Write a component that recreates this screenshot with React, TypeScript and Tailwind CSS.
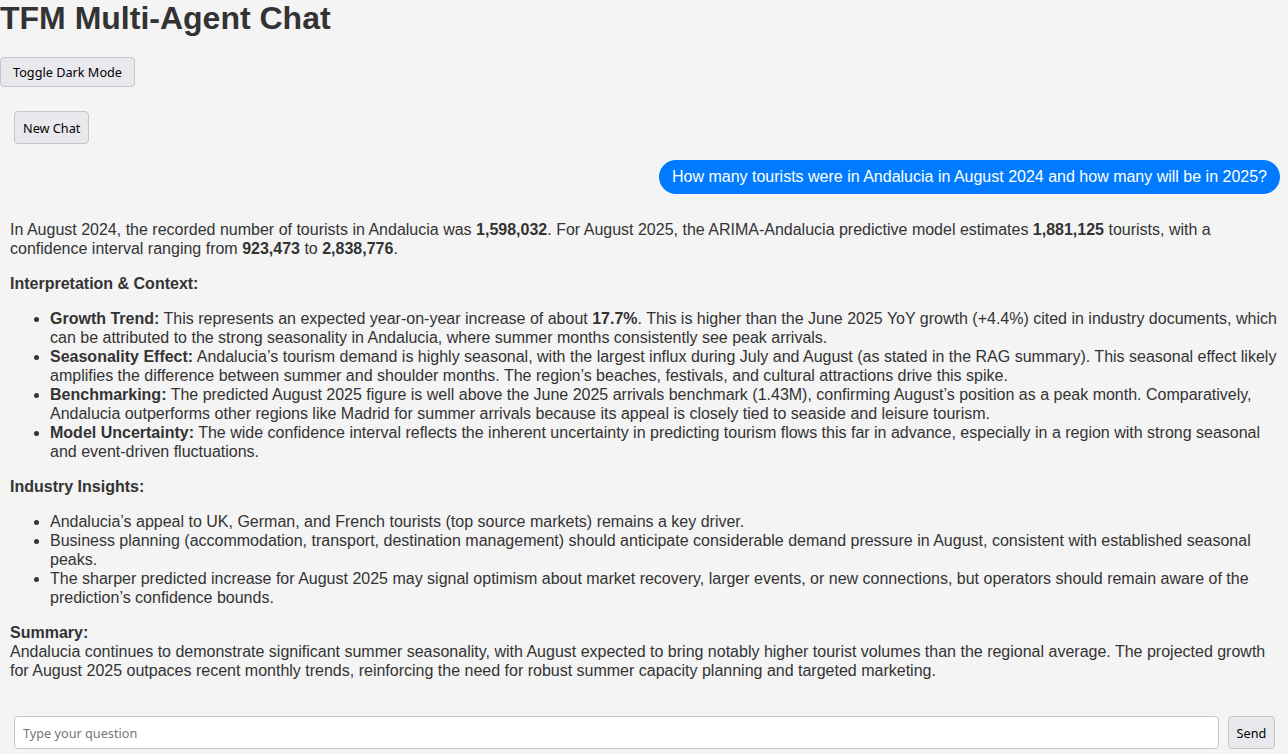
import { useState } from "react";

const btn =
  "bg-[#e9e9ed] border border-[#c6c6c6] rounded-[4px] text-black font-['Noto_Sans',sans-serif] text-[12.7px] leading-[16px] cursor-pointer";

export default function App() {
  const [question, setQuestion] = useState<string>("");

  return (
    <div className="min-h-[754px] bg-[#f4f4f4] text-[#333] font-['Liberation_Sans',Arial,sans-serif] text-[16px] leading-[19px]">
      <h1 className="text-[32px] leading-[37px] font-bold mb-[20px]">TFM Multi-Agent Chat</h1>

      <button className={`${btn} px-[12px] py-[6px]`}>Toggle Dark Mode</button>

      <main className="mt-[24px]">
        <div className="px-[14px]">
          <button className={`${btn} px-[8px] py-[7px] h-[33px]`}>New Chat</button>
        </div>

        <section className="mt-[16px] pl-[10px] pr-[8px]">
          <div className="flex justify-end">
            <div className="bg-[#007bff] text-white rounded-[18px] px-[13px] py-[8px] leading-[18px]">
              How many tourists were in Andalucia in August 2024 and how many will be in 2025?
            </div>
          </div>

          <div className="mt-[26px] pr-[2px]">
            <p className="mb-[16px]">
              In August 2024, the recorded number of tourists in Andalucia was <strong>1,598,032</strong>. For August 2025, the ARIMA-Andalucia predictive model estimates <strong>1,881,125</strong> tourists, with a confidence interval ranging from <strong>923,473</strong> to <strong>2,838,776</strong>.
            </p>
            <p className="mb-[16px] font-bold">Interpretation &amp; Context:</p>
            <ul className="list-disc pl-[40px] mb-[16px]">
              <li>
                <strong>Growth Trend:</strong> This represents an expected year-on-year increase of about <strong>17.7%</strong>. This is higher than the June 2025 YoY growth (+4.4%) cited in industry documents, which can be attributed to the strong seasonality in Andalucia, where summer months consistently see peak arrivals.
              </li>
              <li>
                <strong>Seasonality Effect:</strong> Andalucia’s tourism demand is highly seasonal, with the largest influx during July and August (as stated in the RAG summary). This seasonal effect likely amplifies the difference between summer and shoulder months. The region’s beaches, festivals, and cultural attractions drive this spike.
              </li>
              <li>
                <strong>Benchmarking:</strong> The predicted August 2025 figure is well above the June 2025 arrivals benchmark (1.43M), confirming August’s position as a peak month. Comparatively, Andalucia outperforms other regions like Madrid for summer arrivals because its appeal is closely tied to seaside and leisure tourism.
              </li>
              <li>
                <strong>Model Uncertainty:</strong> The wide confidence interval reflects the inherent uncertainty in predicting tourism flows this far in advance, especially in a region with strong seasonal and event-driven fluctuations.
              </li>
            </ul>
            <p className="mb-[16px] font-bold">Industry Insights:</p>
            <ul className="list-disc pl-[40px] mb-[16px]">
              <li>Andalucia’s appeal to UK, German, and French tourists (top source markets) remains a key driver.</li>
              <li>Business planning (accommodation, transport, destination management) should anticipate considerable demand pressure in August, consistent with established seasonal peaks.</li>
              <li>The sharper predicted increase for August 2025 may signal optimism about market recovery, larger events, or new connections, but operators should remain aware of the prediction’s confidence bounds.</li>
            </ul>
            <p>
              <strong>Summary:</strong>
              <br />
              Andalucia continues to demonstrate significant summer seasonality, with August expected to bring notably higher tourist volumes than the regional average. The projected growth for August 2025 outpaces recent monthly trends, reinforcing the need for robust summer capacity planning and targeted marketing.
            </p>
          </div>
        </section>

        <div className="flex gap-[9px] pl-[14px] pr-[13px] mt-[36px] pb-[6px]">
          <input
            value={question}
            onChange={(e) => setQuestion(e.target.value)}
            placeholder="Type your question"
            className="flex-1 h-[33px] bg-white border border-[#c6c6c6] rounded-[4px] px-[8px] font-['Noto_Sans',sans-serif] text-[12.7px] text-black placeholder:text-[#757575] outline-none"
          />
          <button className={`${btn} w-[47px] h-[33px]`}>Send</button>
        </div>
      </main>
    </div>
  );
}
